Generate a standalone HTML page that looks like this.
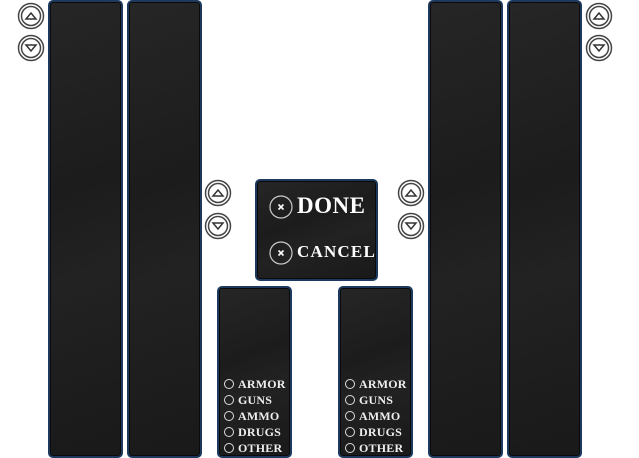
<!DOCTYPE html><html><head><style>
body{margin:0;width:639px;height:458px;background:#fff;position:relative;overflow:hidden;font-family:"Liberation Serif",serif}
.p{position:absolute;background:linear-gradient(160deg,#262626 0%,#1c1c1c 40%,#222 60%,#191919 100%);border:2px solid #1d3a5e;border-radius:5px;box-sizing:border-box;box-shadow:inset 0 0 0 1px #0a0a0a}
.t{position:absolute;color:#fff;font-weight:bold;white-space:nowrap}
.f{position:absolute;color:#eee;font-weight:bold;font-size:12px;line-height:16px;letter-spacing:0.2px}
.f span{display:inline-block;width:10px;height:10px;border:1px solid #ddd;border-radius:50%;margin-right:4px;vertical-align:-1px;box-sizing:border-box}
</style></head><body>
<div class="p" style="left:48px;top:0;width:75px;height:458px"></div>
<div class="p" style="left:127px;top:0;width:75px;height:458px"></div>
<div class="p" style="left:428px;top:0;width:75px;height:458px"></div>
<div class="p" style="left:507px;top:0;width:75px;height:458px"></div>
<div class="p" style="left:255px;top:179px;width:123px;height:102px"></div>
<div class="p" style="left:217px;top:286px;width:75px;height:172px"></div>
<div class="p" style="left:338px;top:286px;width:75px;height:172px"></div>
<svg width="639" height="458" style="position:absolute;left:0;top:0">
<defs>
<g id="u"><circle r="12.5" fill="#fff" stroke="#444" stroke-width="1.5"/><circle r="9.5" fill="none" stroke="#444" stroke-width="1.5"/><path d="M-5 3L0-3L5 3Z" fill="none" stroke="#333" stroke-width="1.5"/></g>
<g id="d"><circle r="12.5" fill="#fff" stroke="#444" stroke-width="1.5"/><circle r="9.5" fill="none" stroke="#444" stroke-width="1.5"/><path d="M-5-3L0 3L5-3Z" fill="none" stroke="#333" stroke-width="1.5"/></g>
<g id="x"><circle r="11" fill="none" stroke="#ccc" stroke-width="1.2"/><path d="M-2.5-2.5L2.5 2.5M2.5-2.5L-2.5 2.5" stroke="#fff" stroke-width="1.6"/></g>
</defs>
<use href="#u" x="31" y="16"/><use href="#d" x="31" y="48"/>
<use href="#u" x="218" y="193"/><use href="#d" x="218" y="226"/>
<use href="#u" x="411" y="193"/><use href="#d" x="411" y="226"/>
<use href="#u" x="599" y="16"/><use href="#d" x="599" y="48"/>
<use href="#x" x="281" y="207"/><use href="#x" x="281" y="253"/>
</svg>
<div class="t" style="left:297px;top:193px;font-size:23px;letter-spacing:0.5px">DONE</div>
<div class="t" style="left:297px;top:242px;font-size:17px;letter-spacing:1.2px">CANCEL</div>
<div class="f" style="left:224px;top:376px"><span></span>ARMOR<br><span></span>GUNS<br><span></span>AMMO<br><span></span>DRUGS<br><span></span>OTHER</div>
<div class="f" style="left:345px;top:376px"><span></span>ARMOR<br><span></span>GUNS<br><span></span>AMMO<br><span></span>DRUGS<br><span></span>OTHER</div>
</body></html>
